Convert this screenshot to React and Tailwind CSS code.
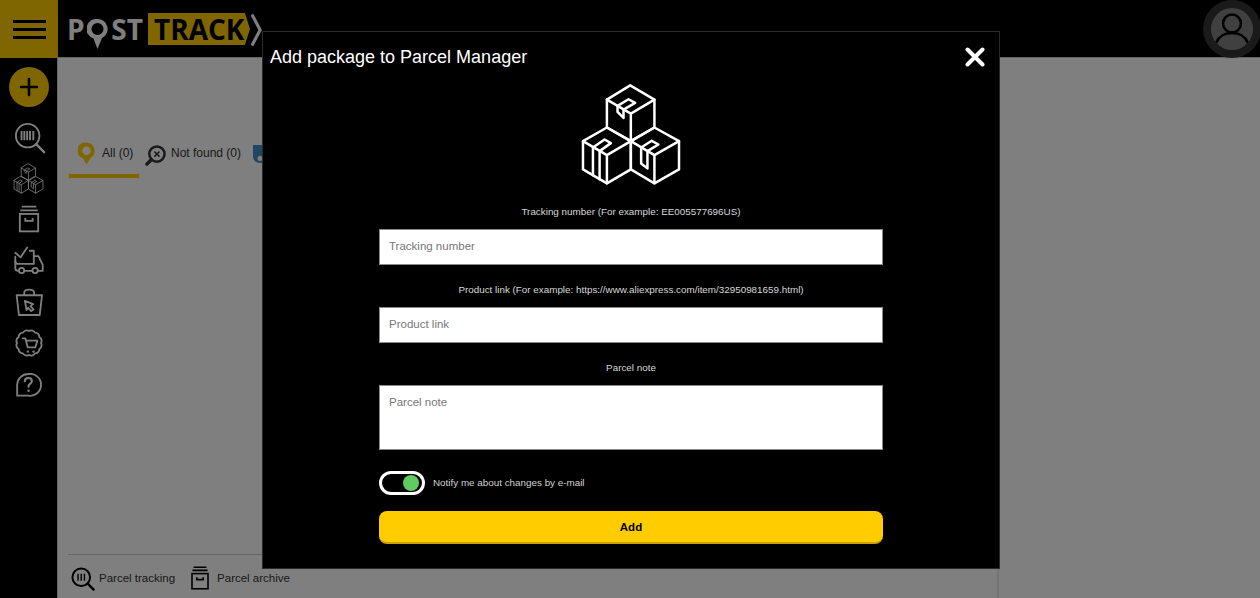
import { useState } from "react";

function CubesIcon({ className, strokeWidth = 7.5 }) {
  return (
    <svg viewBox="60 38 305 310" fill="none" stroke="currentColor" strokeWidth={strokeWidth} strokeLinejoin="round" strokeLinecap="round" className={className}>
      {/* top box */}
      <path d="M210 45 L283 88 V172 L212 213 L140 172 V88 Z" />
      <path d="M140 88 L212 130 L283 88 M212 130 V213" />
      <path d="M172 107 L205 87 L225 98 L190 118 V143 L172 125 Z" />
      {/* left box */}
      <path d="M140 172 L212 213 V298 L140 340 L68 298 V213 Z" />
      <path d="M68 213 L140 255 L212 213 M140 255 V340" />
      <path d="M98 232 L133 208 L152 219 L118 243 V328 M98 232 V316" />
      {/* right box */}
      <path d="M283 172 L357 213 V298 L283 340 L212 298 V213 Z" />
      <path d="M212 213 L283 255 L357 213 M283 255 V340" />
      <path d="M243 232 L275 212 L295 223 L262 243 V295 L243 280 Z" />
    </svg>
  );
}

function BarcodeSearch({ className, strokeWidth = 2, bars = "M8 9.5 V19.5 M11 9.5 V19.5 M14 9.5 V19.5 M17 9.5 V19.5 M20.5 9.5 V19.5" }) {
  return (
    <svg viewBox="0 0 34 34" fill="none" stroke="currentColor" strokeWidth={strokeWidth} strokeLinecap="round" className={className}>
      <circle cx="14.5" cy="14.5" r="12.5" />
      <path d="M24 24 L32 32" strokeWidth={strokeWidth + 0.6} />
      <path d={bars} strokeWidth="2" strokeLinecap="butt" />
    </svg>
  );
}

function ArchiveIcon({ className, strokeWidth = 2 }) {
  return (
    <svg viewBox="0 0 24 30" fill="none" stroke="currentColor" strokeWidth={strokeWidth} className={className}>
      <path d="M4 1.5 H20 M2.5 5.5 H21.5" />
      <rect x="2" y="9.5" width="20" height="19" />
      <path d="M8 14 V17 H16 V14" />
    </svg>
  );
}

function TruckIcon({ className }) {
  return (
    <svg viewBox="15 15 100 90" fill="none" stroke="currentColor" strokeWidth="5.5" strokeLinejoin="round" strokeLinecap="round" className={className}>
      <path d="M22 38 L38 52 L58 22" />
      <path d="M22 50 V85 Q22 93 31 93" />
      <path d="M50 93 H73 M92 93 H105 V75 L92 48 H78" />
      <path d="M66 32 H78 V72 H30 Q22 72 22 62" />
      <circle cx="41" cy="92" r="8" />
      <circle cx="82" cy="92" r="8" />
    </svg>
  );
}

function BagIcon({ className }) {
  return (
    <svg viewBox="20 143 88 88" fill="none" stroke="currentColor" strokeWidth="5.5" strokeLinejoin="round" className={className}>
      <path d="M25 165 H102 L95 225 H32 Z" />
      <path d="M48 165 V158 Q48 148 63 148 Q78 148 78 158 V165" />
      <path d="M50 182 L75 192 L67 198 L76 208 L69 213 L60 203 L55 210 Z" />
    </svg>
  );
}

// wavy seal outline, bumps round a circle
function sealPath(cx, cy, r, bumps) {
  let d = "";
  for (let i = 0; i <= bumps; i++) {
    const a = (i / bumps) * Math.PI * 2;
    const x = (cx + r * Math.cos(a)).toFixed(1);
    const y = (cy + r * Math.sin(a)).toFixed(1);
    d += i === 0 ? `M${x} ${y}` : ` A13 13 0 0 1 ${x} ${y}`;
  }
  return d + " Z";
}

function BadgeCartIcon({ className }) {
  return (
    <svg viewBox="17 7 84 84" fill="none" stroke="currentColor" strokeWidth="5.5" strokeLinejoin="round" strokeLinecap="round" className={className}>
      <path d={sealPath(59, 49, 36, 12)} />
      <path d="M40 35 H48 L55 62 H78 L84 42 H50" />
      <path d="M55 75 H56 M72 75 H73" strokeWidth="6.5" />
    </svg>
  );
}

function HelpIcon({ className }) {
  return (
    <svg viewBox="24 137 80 75" fill="none" stroke="currentColor" strokeWidth="5.5" strokeLinejoin="round" strokeLinecap="round" className={className}>
      <path d="M63 140 A33 33 0 1 1 63 205 H30 V172 A33 33 0 0 1 63 140 Z" />
      <path d="M53 162 Q53 152 64 152 Q74 152 74 161 Q74 167 68 170 Q64 172 64 178" strokeWidth="6.5" />
      <path d="M64 190 V190.5" strokeWidth="7.5" />
    </svg>
  );
}

function PinIcon({ className }) {
  return (
    <svg viewBox="0 0 18 24" className={className}>
      <path fillRule="evenodd" fill="currentColor" d="M9 0 A8.5 8.5 0 0 1 13.6 15.7 L9 23 L5.4 16.6 A8.5 8.5 0 0 1 9 0 Z M9 4 A4.5 4.5 0 1 0 9 13 A4.5 4.5 0 1 0 9 4 Z" />
    </svg>
  );
}

function NotFoundIcon({ className }) {
  return (
    <svg viewBox="0 0 22 22" fill="none" stroke="currentColor" className={className}>
      <circle cx="12.5" cy="9.5" r="8" strokeWidth="2.6" />
      <path d="M6.5 15.5 L2 20" strokeWidth="3.6" strokeLinecap="round" />
      <path d="M9.8 6.8 L15.2 12.2 M15.2 6.8 L9.8 12.2" strokeWidth="1.6" />
    </svg>
  );
}

function Logo() {
  return (
    <div className="flex items-start ml-[9px] mt-[13px] font-['Open_Sans',sans-serif] select-none">
      <div className="flex items-start justify-between w-[76px] h-[32px] text-white text-[28px] leading-[32px] font-bold">
        <span>P</span>
        <svg viewBox="0 0 20 30" className="w-[21px] h-[30px] mt-[6px]">
          <path fillRule="evenodd" fill="currentColor" d="M10 0 A10 10 0 0 1 14.5 19 L10 30 L6 19.5 A10 10 0 0 1 10 0 Z M10 4 A6 6 0 1 0 10 16 A6 6 0 1 0 10 4 Z" />
        </svg>
        <span>ST</span>
      </div>
      <div className="flex items-start ml-[5px]">
        <div className="h-[32px] w-[102px] bg-[#ffcc00] text-black text-[28px] leading-[32px] font-bold pl-[6px] whitespace-nowrap [clip-path:polygon(0_0,95%_0,100%_50%,95%_100%,0_100%)]">
          TRACK
        </div>
        <svg viewBox="0 0 12 36" className="w-[11px] h-[34px] ml-[1px] text-white" fill="none" stroke="currentColor" strokeWidth="3.4">
          <path d="M1 1 L10 18 L1 35" />
        </svg>
      </div>
    </div>
  );
}

function Field({ label, children }) {
  return (
    <div className="flex flex-col">
      <label className="h-[14px] mb-[10px] text-center text-[9.85px] leading-[14px] text-[#d8d8d8]">{label}</label>
      {children}
    </div>
  );
}

const inputClass = "w-full bg-white border border-[#8a8a8a] px-[9px] text-[11.5px] text-black outline-none placeholder:text-[#777]";

export default function App() {
  const [notify, setNotify] = useState(true);

  return (
    <div className="relative h-screen w-full overflow-hidden flex flex-col bg-white font-['Liberation_Sans',Arial,sans-serif]">
      {/* header */}
      <header className="h-[58px] shrink-0 bg-black flex items-start border-b border-[#cfcfcf]">
        <button className="w-[58px] h-[58px] bg-[#ffcc00] flex flex-col justify-center items-center gap-[5px]">
          <span className="block w-[33px] h-[3px] bg-black" />
          <span className="block w-[33px] h-[3px] bg-black" />
          <span className="block w-[33px] h-[3px] bg-black" />
        </button>
        <Logo />
        <div className="ml-auto w-[58px] h-[58px] mr-[-1px] rounded-full bg-[#353535] flex items-center justify-center">
          <div className="w-[42px] h-[42px] rounded-full bg-[#808080] overflow-hidden">
            <svg viewBox="0 0 42 42" fill="none" stroke="black" strokeWidth="2.6" className="w-full h-full">
              <circle cx="21" cy="15.5" r="9" />
              <path d="M5 35 Q9 25 21 25 Q33 25 37 35" />
            </svg>
          </div>
        </div>
      </header>

      <div className="flex-1 flex min-h-0">
        {/* sidebar */}
        <aside className="w-[58px] shrink-0 bg-black border-r border-[#cfcfcf] flex flex-col items-center text-white pt-[9px]">
          <button className="w-[40px] h-[40px] rounded-full bg-[#ffcc00] flex items-center justify-center ml-[1px]">
            <svg viewBox="0 0 20 20" className="w-[20px] h-[20px]" stroke="black" strokeWidth="2.6" strokeLinecap="round">
              <path d="M10 2 V18 M2 10 H18" />
            </svg>
          </button>
          <BarcodeSearch className="w-[32px] h-[32px] mt-[15px] ml-[3px]" />
          <CubesIcon className="w-[31px] h-[31px] mt-[9px]" strokeWidth={8} />
          <ArchiveIcon className="w-[22px] h-[28px] mt-[11px] ml-[1px]" />
          <TruckIcon className="w-[33px] h-[30px] mt-[12px] ml-[2px]" />
          <BagIcon className="w-[29px] h-[29px] mt-[13px] ml-[1px]" />
          <BadgeCartIcon className="w-[28px] h-[28px] mt-[12px] ml-[1px]" />
          <HelpIcon className="w-[27px] h-[25px] mt-[16px]" />
        </aside>

        {/* page */}
        <main className="flex-1 pl-[10px]">
          <div className="w-[931px] h-full flex flex-col border-r-2 border-[#e8e8e8]">
            <div className="flex items-start mt-[84px] text-[12px] text-[#333]">
              <div className="w-[70px] h-[36px] ml-[1px] border-b-[4px] border-[#ffcc00] flex items-start pl-[9px] gap-[7px]">
                <PinIcon className="w-[17px] h-[24px] text-[#ffcc00]" />
                <span className="whitespace-nowrap leading-[22px]">All (0)</span>
              </div>
              <div className="flex items-start ml-[6px] gap-[5px] pt-[3px]">
                <NotFoundIcon className="w-[21px] h-[21px] text-[#333]" />
                <span className="whitespace-nowrap leading-[16px]">Not found (0)</span>
              </div>
              <svg viewBox="0 0 14 18" className="w-[14px] h-[18px] ml-[12px] mt-[3px] text-[#3b8ec4]">
                <path fillRule="evenodd" fill="currentColor" d="M0 0 H14 V12 A7 6 0 0 1 0 12 Z M7 11 A2.5 2.5 0 1 0 7 16 A2.5 2.5 0 1 0 7 11 Z" />
              </svg>
            </div>

            <div className="mt-auto border-t border-[#ccc] h-[44px] flex items-center text-[11.5px] text-[#333]">
              <BarcodeSearch className="w-[24px] h-[24px] ml-[3px] mt-[5px] text-black" strokeWidth={2.8} bars="M10 9.5 V19.5 M14.5 9.5 V19.5 M19 9.5 V19.5" />
              <span className="ml-[4px] mt-[5px]">Parcel tracking</span>
              <ArchiveIcon className="w-[22px] h-[24px] ml-[14px] mt-[3px] text-black" />
              <span className="ml-[6px] mt-[5px]">Parcel archive</span>
            </div>
          </div>
        </main>
      </div>

      {/* dialog */}
      <div className="fixed inset-0 bg-black/50 flex justify-center items-start">
        <div className="w-[738px] h-[538px] mt-[31px] ml-[2px] bg-black border border-[#2a2a2a] flex flex-col text-white">
          <div className="h-[50px] shrink-0 flex items-center justify-between pl-[7px] pr-[14px]">
            <h2 className="text-[18px] leading-none">Add package to Parcel Manager</h2>
            <svg viewBox="0 0 20 20" className="w-[20px] h-[20px]" stroke="white" strokeWidth="4" strokeLinecap="round">
              <path d="M2.5 2.5 L17.5 17.5 M17.5 2.5 L2.5 17.5" />
            </svg>
          </div>

          <div className="flex justify-center mt-[1px] mr-[1px]">
            <CubesIcon className="w-[102px] h-[103px]" />
          </div>

          <form className="w-[504px] mx-auto mt-[19px] flex flex-col" onSubmit={(e) => e.preventDefault()}>
            <Field label="Tracking number (For example: EE005577696US)">
              <input placeholder="Tracking number" className={`h-[36px] pb-[2px] ${inputClass}`} />
            </Field>
            <div className="mt-[18px]">
              <Field label="Product link (For example: https://www.aliexpress.com/item/32950981659.html)">
                <input placeholder="Product link" className={`h-[36px] pb-[2px] ${inputClass}`} />
              </Field>
            </div>
            <div className="mt-[18px]">
              <Field label="Parcel note">
                <textarea placeholder="Parcel note" className={`block h-[65px] resize-none py-[9px] leading-[14px] ${inputClass}`} />
              </Field>
            </div>

            <div className="flex items-center mt-[21px]">
              <button
                type="button"
                onClick={() => setNotify(!notify)}
                className={`w-[46px] h-[24px] rounded-full border-[3px] border-white bg-black flex items-center px-[3px] ${notify ? "justify-end" : "justify-start"}`}
              >
                <span className="block w-[16px] h-[16px] rounded-full bg-[#5ecb63]" />
              </button>
              <span className="ml-[8px] text-[9.85px] text-[#d0d0d0]">Notify me about changes by e-mail</span>
            </div>

            <button className="mt-[16px] h-[33px] pt-[2px] rounded-[8px] bg-[#ffcc00] border-b-2 border-[#c9a100] text-black text-[11.5px] font-bold">
              Add
            </button>
          </form>
        </div>
      </div>
    </div>
  );
}
